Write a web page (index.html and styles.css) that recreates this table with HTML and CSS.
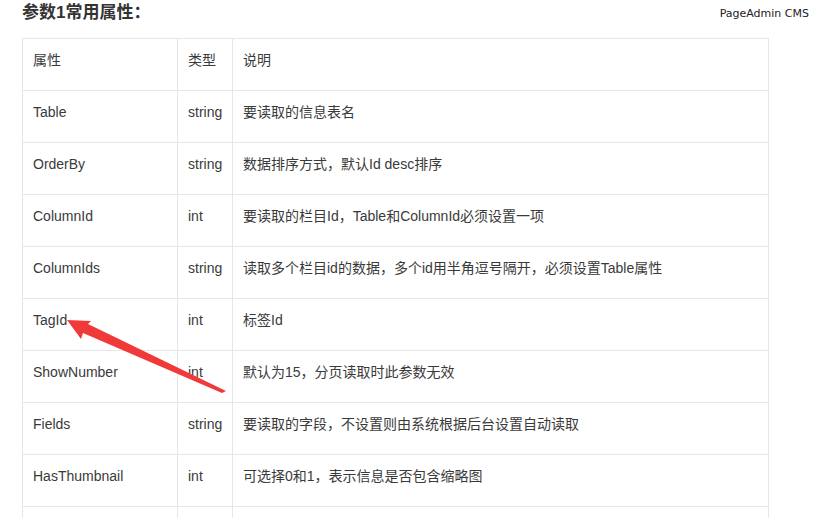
FILE: index.html
```html
<!DOCTYPE html>
<html lang="zh-CN">
<head>
<meta charset="utf-8">
<title>参数1常用属性</title>
<link rel="stylesheet" href="styles.css">
</head>
<body>
<div class="page">
  <div class="head">
    <h3 class="title">参数1常用属性：</h3>
    <span class="brand">PageAdmin CMS</span>
  </div>
  <table class="props">
    <colgroup><col class="c1"><col class="c2"><col class="c3"></colgroup>
    <tr><td>属性</td><td>类型</td><td>说明</td></tr>
    <tr><td>Table</td><td>string</td><td>要读取的信息表名</td></tr>
    <tr><td>OrderBy</td><td>string</td><td>数据排序方式，默认Id desc排序</td></tr>
    <tr><td>ColumnId</td><td>int</td><td>要读取的栏目Id，Table和ColumnId必须设置一项</td></tr>
    <tr><td>ColumnIds</td><td>string</td><td>读取多个栏目id的数据，多个id用半角逗号隔开，必须设置Table属性</td></tr>
    <tr><td>TagId</td><td>int</td><td>标签Id</td></tr>
    <tr><td>ShowNumber</td><td>int</td><td>默认为15，分页读取时此参数无效</td></tr>
    <tr><td>Fields</td><td>string</td><td>要读取的字段，不设置则由系统根据后台设置自动读取</td></tr>
    <tr><td>HasThumbnail</td><td>int</td><td>可选择0和1，表示信息是否包含缩略图</td></tr>
    <tr><td>&nbsp;</td><td>&nbsp;</td><td>&nbsp;</td></tr>
  </table>
  <svg class="arrow" width="819" height="518" viewBox="0 0 819 518">
    <polygon points="67,320 91,321 88,324 226,391 222,393 83,333 81,339" fill="#f03a3a"/>
  </svg>
</div>
</body>
</html>
```
FILE: styles.css
```css
html, body {
  margin: 0;
  padding: 0;
  background: #fff;
  overflow: hidden;
}
.page {
  position: relative;
  width: 819px;
  height: 518px;
  overflow: hidden;
  padding: 0 10px 0 22px;
  box-sizing: border-box;
  font-family: "Liberation Sans", "Noto Sans CJK SC", sans-serif;
  color: #333;
}
.head {
  display: flex;
  justify-content: space-between;
  align-items: center;
  height: 26px;
  margin-bottom: 12px;
}
.title {
  margin: 0;
  font-size: 17px;
  font-weight: bold;
  line-height: 24px;
  color: #333;
  font-family: "Liberation Sans", "Noto Sans CJK SC", sans-serif;
}
.brand {
  font-family: "DejaVu Sans", sans-serif;
  font-size: 11px;
  color: #222;
}
.props {
  border-collapse: collapse;
  width: 747px;
  table-layout: fixed;
  font-size: 14px;
}
.c1 { width: 155px; }
.c2 { width: 55px; }
.props td {
  border: 1px solid #e6e6e6;
  padding: 11px 10px 20px 10px;
  line-height: 20px;
  color: #3a3a3a;
  white-space: nowrap;
  vertical-align: top;
}
.arrow {
  position: absolute;
  left: 0;
  top: 0;
  pointer-events: none;
}
```
